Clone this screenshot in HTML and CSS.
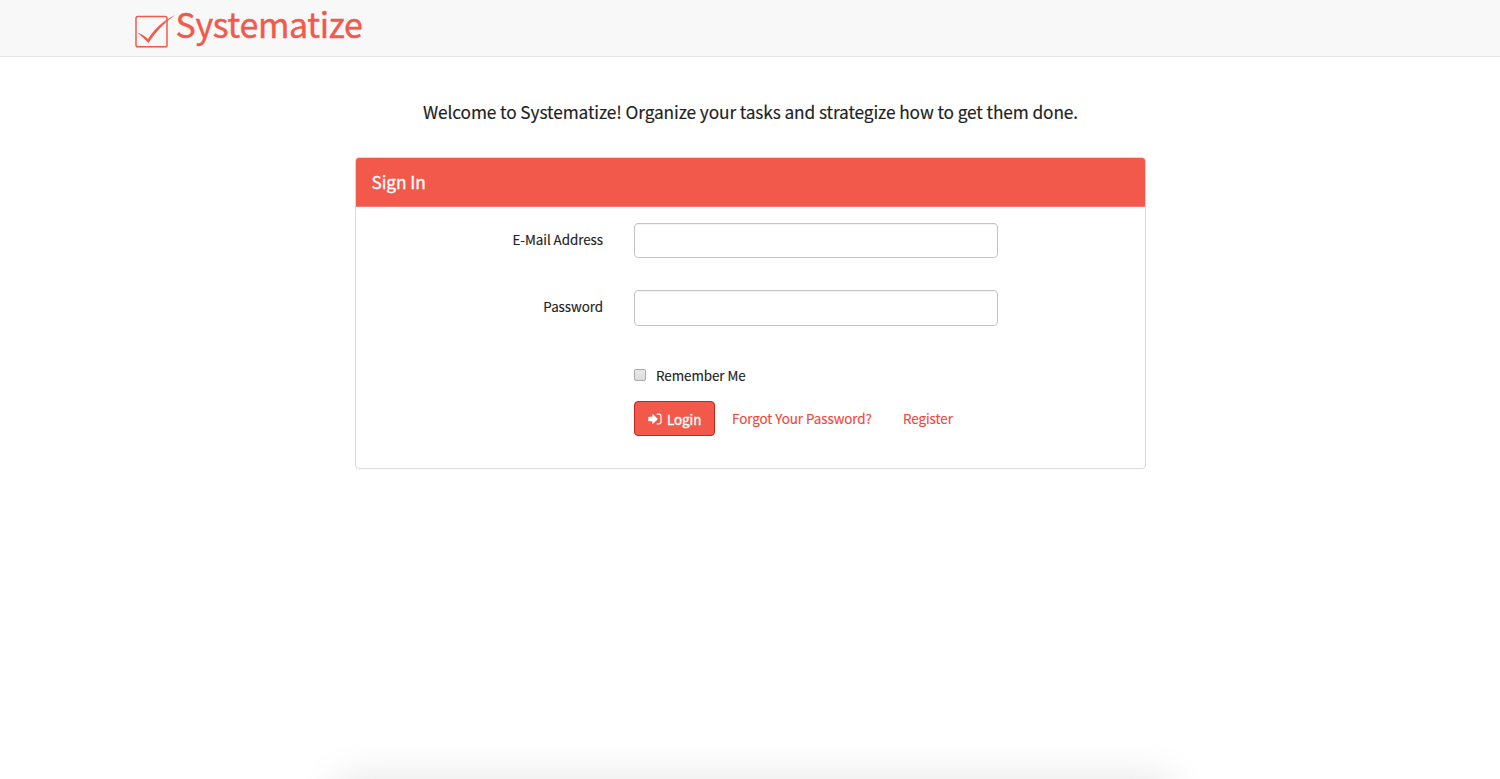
FILE: index.html
```html
<!DOCTYPE html>
<html lang="en">
<head>
<meta charset="utf-8">
<title>Systematize</title>
<link rel="stylesheet" href="styles.css">
</head>
<body>
<nav class="navbar">
  <a class="brand">
    <svg class="brand-icon" width="42" height="36" viewBox="0 0 42 36" aria-hidden="true">
      <rect x="2" y="4.400" width="31" height="30.400" rx="1.800" fill="none" stroke="#f2594b" stroke-width="1.500"/>
      <path d="M3.400 20.500C7.500 22 11.200 24.300 14 27C20 17.500 29 8.500 41.300 3C31 10 21.500 20 14.500 31C10.500 26.800 7 23.800 3.400 20.500Z" fill="#f2594b"/>
    </svg>
    <span class="brand-name">Systematize</span>
  </a>
</nav>
<main class="page">
  <p class="welcome">Welcome to Systematize! Organize your tasks and strategize how to get them done.</p>
  <section class="panel">
    <h1 class="panel-heading">Sign In</h1>
    <form class="panel-body">
      <div class="row">
        <label class="label" for="email">E-Mail Address</label>
        <input class="control" id="email" type="email">
      </div>
      <div class="row">
        <label class="label" for="password">Password</label>
        <input class="control" id="password" type="password">
      </div>
      <label class="remember"><input class="checkbox" type="checkbox"><span>Remember Me</span></label>
      <div class="actions">
        <button class="login" type="button">
          <svg class="login-icon" width="14" height="12" viewBox="0 0 14 12" aria-hidden="true">
            <path d="M0.900 3.700H4.300V1.400Q4.300 .5 5.100 1.200L9.400 5.500Q9.900 6 9.400 6.500L5.100 10.800Q4.300 11.500 4.300 10.600V8.300H.9Q.3 8.300 .3 7.700V4.300Q.3 3.700 .9 3.700Z" fill="#fff"/>
            <path d="M8.700 1.200H11Q13 1.200 13 3.200V8.800Q13 10.800 11 10.800H8.700" fill="none" stroke="#fff" stroke-width="1.200"/>
          </svg>
          <span>Login</span>
        </button>
        <a class="link forgot">Forgot Your Password?</a>
        <a class="link register">Register</a>
      </div>
    </form>
  </section>
</main>
<div class="bottom-shadow"><div class="bottom-shadow-edge"></div></div>
</body>
</html>
```
FILE: styles.css
```css
* { box-sizing: border-box; }
body {
  margin: 0;
  height: 779px;
  display: flex;
  flex-direction: column;
  background: #fff;
  color: #222;
  font: 13.4px/20px "Noto Sans CJK SC", "Noto Sans", sans-serif;
  letter-spacing: -.05px;
  -webkit-text-stroke: .15px currentColor;
}
.navbar {
  height: 57px;
  flex: none;
  padding-left: 134px;
  background: #f8f8f8;
  border-bottom: 1px solid #e5e5e5;
}
.brand { display: flex; color: #f2594b; }
.brand-icon { margin-top: 12px; flex: none; }
.brand-name {
  font-size: 34px;
  line-height: 48px;
  letter-spacing: -.38px;
  margin-left: -.5px;
  -webkit-text-stroke-width: .4px;
}
.page { width: 791px; margin: 0 0 0 355px; }
.welcome {
  margin: 42px 0 0;
  font-size: 17.3px;
  line-height: 26px;
  letter-spacing: -.11px;
  text-align: center;
  white-space: nowrap;
}
.panel {
  margin-top: 32px;
  height: 312px;
  border: 1px solid #d9d9d9;
  border-radius: 4px;
  overflow: hidden;
}
.panel-heading {
  margin: 0;
  height: 49px;
  padding-left: 15.5px;
  background: #f2594b;
  border-bottom: 1px solid #f5786d;
  color: #fff;
  font-size: 17.3px;
  font-weight: 400;
  line-height: 48px;
  letter-spacing: -.1px;
  -webkit-text-stroke-width: .3px;
}
.panel-body { padding-top: 16px; }
.row { display: flex; height: 35px; margin-bottom: 32px; }
.label { width: 247px; margin-right: 31px; text-align: right; line-height: 33px; }
.control {
  width: 364px;
  height: 36px;
  border: 1px solid #c4c4c4;
  border-radius: 4px;
  background: #fff;
  box-shadow: inset 0 1px 1px rgba(0, 0, 0, .05);
}
.row:first-child .control { height: 35px; }
.remember { display: flex; align-items: center; margin: 40px 0 0 278px; height: 20px; }
.checkbox {
  appearance: none;
  width: 12px;
  height: 12px;
  margin: 0 10px 0 0;
  border: 1px solid #aaa;
  border-radius: 2px;
  background: linear-gradient(#e8e8e8, #dcdcdc);
}
.actions { display: flex; margin: 16px 0 0 278px; line-height: 34px; }
.login {
  display: flex;
  align-items: center;
  width: 81px;
  height: 35px;
  padding: 1px 0 0 13px;
  border: 1px solid #c9211b;
  border-radius: 4px;
  background: #f2594b;
  color: #fff;
  font: inherit;
  letter-spacing: inherit;
  -webkit-text-stroke-width: .35px;
}
.login-icon { margin-right: 5px; }
.link { color: #f4463b; }
.forgot { margin-left: 17px; }
.register { margin-left: 31px; }
.bottom-shadow {
  height: 60px;
  margin-top: auto;
  padding: 63px 337px 0 345px;
  overflow: hidden;
}
.bottom-shadow-edge {
  height: 0;
  box-shadow: 0 20px 42px 20px rgba(0, 0, 0, .11);
  margin: 0 12px;
}
```
